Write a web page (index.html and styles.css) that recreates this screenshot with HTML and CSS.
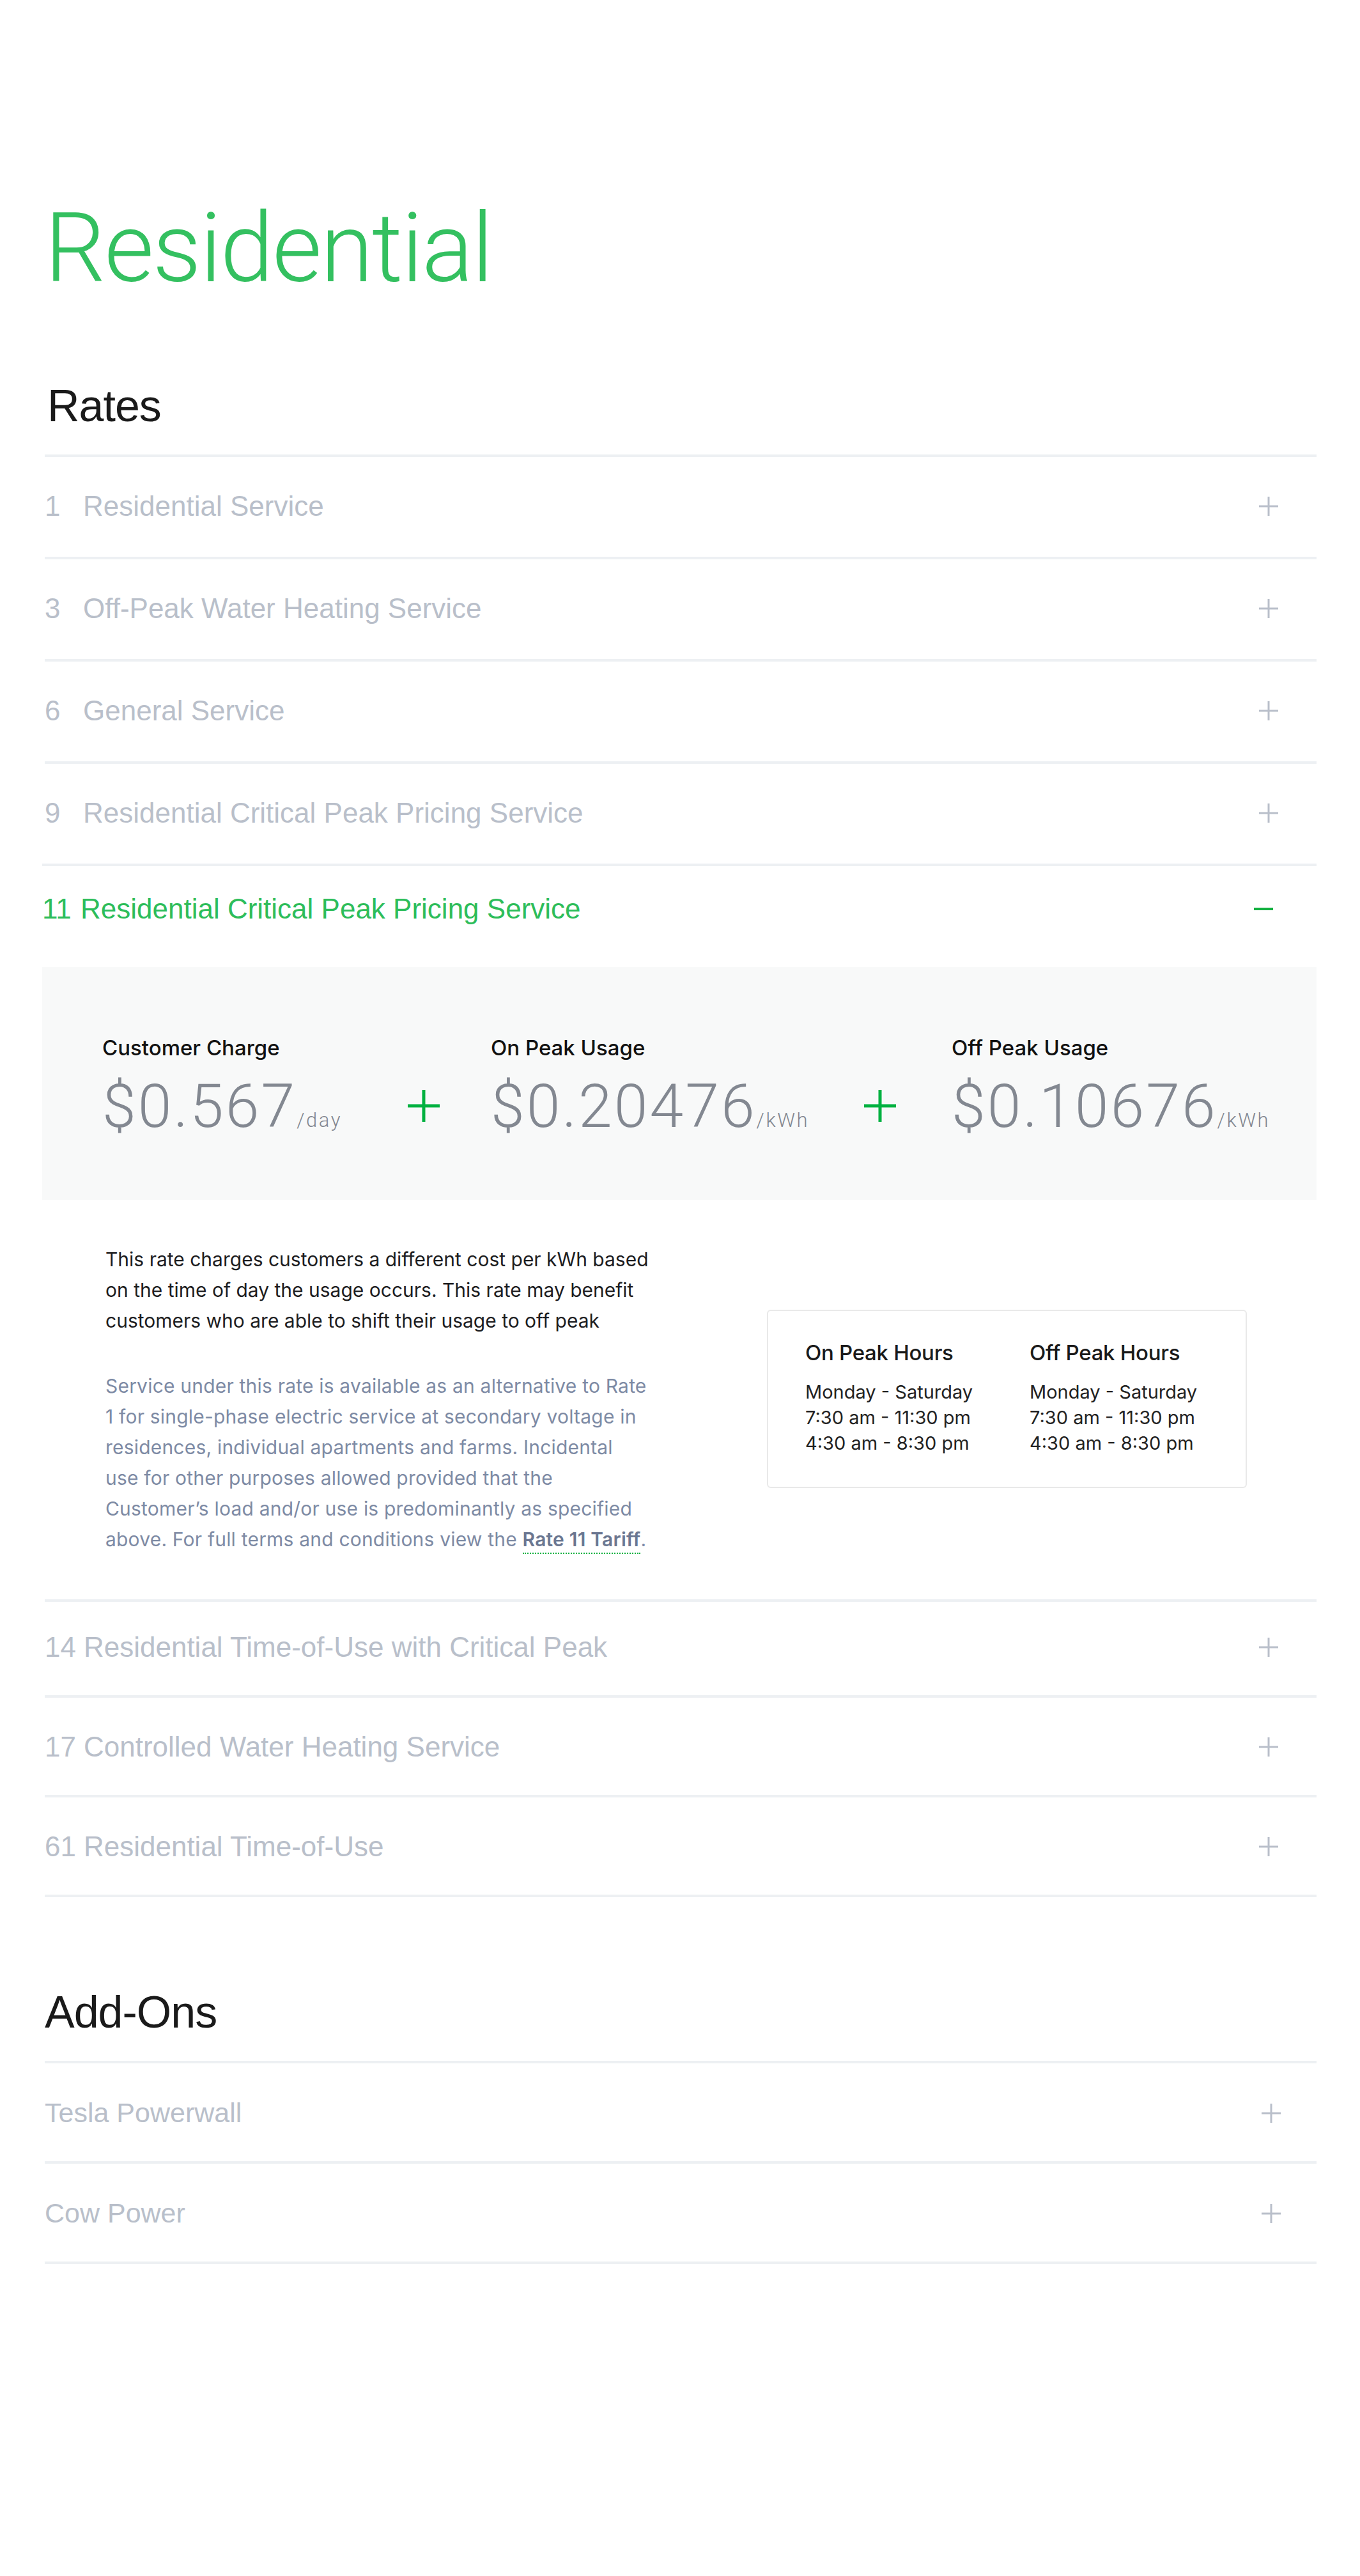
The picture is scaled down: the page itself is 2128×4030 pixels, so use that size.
FILE: index.html
```html
<!DOCTYPE html>
<html lang="en">
<head>
<meta charset="utf-8">
<title>Residential Rates</title>
<link rel="stylesheet" href="styles.css">
</head>
<body>
<main class="page">
  <h1 class="page-title">Residential</h1>

  <section class="group">
    <h2 class="group-title">Rates</h2>
    <ul class="acc">
      <li class="acc-item acc-item--top">
        <div class="acc-head"><span class="acc-num">1</span><span class="acc-name">Residential Service</span>
          <svg class="icon-plus" viewBox="0 0 30 30"><path d="M15 0v30M0 15h30"/></svg></div>
      </li>
      <li class="acc-item acc-item--top">
        <div class="acc-head"><span class="acc-num">3</span><span class="acc-name">Off-Peak Water Heating Service</span>
          <svg class="icon-plus" viewBox="0 0 30 30"><path d="M15 0v30M0 15h30"/></svg></div>
      </li>
      <li class="acc-item acc-item--top">
        <div class="acc-head"><span class="acc-num">6</span><span class="acc-name">General Service</span>
          <svg class="icon-plus" viewBox="0 0 30 30"><path d="M15 0v30M0 15h30"/></svg></div>
      </li>
      <li class="acc-item acc-item--top">
        <div class="acc-head"><span class="acc-num">9</span><span class="acc-name">Residential Critical Peak Pricing Service</span>
          <svg class="icon-plus" viewBox="0 0 30 30"><path d="M15 0v30M0 15h30"/></svg></div>
      </li>
      <li class="acc-item is-open">
        <div class="acc-head"><span class="acc-num">11</span><span class="acc-name">Residential Critical Peak Pricing Service</span>
          <svg class="icon-minus" viewBox="0 0 30 4"><path d="M0 2h30"/></svg></div>

        <div class="charges">
          <div class="charge">
            <div class="charge-label">Customer Charge</div>
            <div class="charge-price">$0.567<span class="charge-unit">/day</span></div>
          </div>
          <svg class="charge-op" viewBox="0 0 50 50"><path d="M25 0v50M0 25h50"/></svg>
          <div class="charge">
            <div class="charge-label">On Peak Usage</div>
            <div class="charge-price">$0.20476<span class="charge-unit">/kWh</span></div>
          </div>
          <svg class="charge-op" viewBox="0 0 50 50"><path d="M25 0v50M0 25h50"/></svg>
          <div class="charge">
            <div class="charge-label">Off Peak Usage</div>
            <div class="charge-price">$0.10676<span class="charge-unit">/kWh</span></div>
          </div>
        </div>

        <div class="details">
          <div class="details-text">
            <p class="lead">This rate charges customers a different cost per kWh based<br>on the time of day the usage occurs. This rate may benefit<br>customers who are able to shift their usage to off peak</p>
            <p class="terms">Service under this rate is available as an alternative to Rate<br>1 for single-phase electric service at secondary voltage in<br>residences, individual apartments and farms. Incidental<br>use for other purposes allowed provided that the<br>Customer’s load and/or use is predominantly as specified<br>above. For full terms and conditions view the <a class="terms-link" href="#">Rate 11 Tariff</a>.</p>
          </div>
          <div class="hours">
            <div class="hours-col">
              <h3 class="hours-title">On Peak Hours</h3>
              <p class="hours-text">Monday - Saturday<br>7:30 am - 11:30 pm<br>4:30 am - 8:30 pm</p>
            </div>
            <div class="hours-col">
              <h3 class="hours-title">Off Peak Hours</h3>
              <p class="hours-text">Monday - Saturday<br>7:30 am - 11:30 pm<br>4:30 am - 8:30 pm</p>
            </div>
          </div>
        </div>
      </li>
      <li class="acc-item">
        <div class="acc-head"><span class="acc-num">14</span><span class="acc-name">Residential Time-of-Use with Critical Peak</span>
          <svg class="icon-plus" viewBox="0 0 30 30"><path d="M15 0v30M0 15h30"/></svg></div>
      </li>
      <li class="acc-item">
        <div class="acc-head"><span class="acc-num">17</span><span class="acc-name">Controlled Water Heating Service</span>
          <svg class="icon-plus" viewBox="0 0 30 30"><path d="M15 0v30M0 15h30"/></svg></div>
      </li>
      <li class="acc-item">
        <div class="acc-head"><span class="acc-num">61</span><span class="acc-name">Residential Time-of-Use</span>
          <svg class="icon-plus" viewBox="0 0 30 30"><path d="M15 0v30M0 15h30"/></svg></div>
      </li>
    </ul>
  </section>

  <section class="group group--addons">
    <h2 class="group-title">Add-Ons</h2>
    <ul class="acc">
      <li class="acc-item acc-item--addon">
        <div class="acc-head"><span class="acc-name">Tesla Powerwall</span>
          <svg class="icon-plus" viewBox="0 0 30 30"><path d="M15 0v30M0 15h30"/></svg></div>
      </li>
      <li class="acc-item acc-item--addon">
        <div class="acc-head"><span class="acc-name">Cow Power</span>
          <svg class="icon-plus" viewBox="0 0 30 30"><path d="M15 0v30M0 15h30"/></svg></div>
      </li>
    </ul>
  </section>
</main>
</body>
</html>
```

FILE: styles.css
```css
* { box-sizing: border-box; }

html, body {
  margin: 0;
  padding: 0;
  background: #ffffff;
}

body {
  font-family: "Liberation Sans", Arial, sans-serif;
  color: #1c1c1e;
}

.page {
  width: 1990px;
  margin-left: 70px;
  padding-bottom: 400px;
}

.page-title {
  margin: 314px 0 0;
  font-family: Roboto, "Liberation Sans", sans-serif;
  font-weight: 300;
  font-size: 150px;
  line-height: 150px;
  letter-spacing: -2px;
  color: #34c060;
}

.group-title {
  margin: 136px 0 41px 4px;
  font-weight: 400;
  font-size: 70px;
  line-height: 70px;
  letter-spacing: -1px;
  color: #1a1a1a;
}

.group--addons .group-title {
  margin: 145px 0 41px 0;
}

.acc {
  list-style: none;
  margin: 0;
  padding: 0;
  border-bottom: 4px solid #edf0f3;
}

.acc-item {
  border-top: 4px solid #edf0f3;
  padding: 55px 0 53px;
}

.acc-item--top {
  padding-bottom: 57px;
}

.is-open + .acc-item {
  padding-top: 49px;
}

.acc-item--addon {
  padding: 56px 0 54px;
}

.acc-head {
  display: flex;
  align-items: center;
  font-size: 44px;
  line-height: 44px;
  color: #b9bfca;
}

.acc-item--addon .acc-head {
  font-size: 43px;
  line-height: 43px;
}

.acc-num {
  min-width: 48px;
  margin-right: 12px;
}

.acc-name {
  flex: 1;
}

.icon-plus {
  width: 30px;
  height: 30px;
  margin-right: 60px;
  fill: none;
  stroke: #b9bfca;
  stroke-width: 3;
}

.acc-item--addon .icon-plus {
  margin-right: 56px;
}

/* open item */
.acc-item.is-open {
  padding: 45px 0 70px;
  margin-left: -4px;
}

.is-open .acc-head {
  color: #2dbd5a;
}

.icon-minus {
  width: 30px;
  height: 4px;
  margin-right: 68px;
  fill: none;
  stroke: #13b040;
  stroke-width: 4;
}

.charges {
  margin-top: 69px;
  background: #f8f9f9;
  padding: 110px 0 99px 94px;
  display: grid;
  grid-template-columns: 478px 130px 584px 137px 1fr;
  align-items: end;
}

.charge-label {
  font-family: Inter, Roboto, "Liberation Sans", sans-serif;
  font-weight: 500;
  font-size: 33px;
  line-height: 33px;
  letter-spacing: 0;
  color: #111111;
}

.charge-price {
  margin-top: 27px;
  font-family: Roboto, "Liberation Sans", sans-serif;
  font-weight: 300;
  font-size: 95px;
  line-height: 95px;
  letter-spacing: 3px;
  color: #838891;
  white-space: nowrap;
}

.charge-unit {
  margin-left: 0;
  font-size: 31px;
  line-height: 1;
  letter-spacing: 2.5px;
}

.charge-op {
  width: 50px;
  height: 50px;
  margin-bottom: 23px;
  fill: none;
  stroke: #00b140;
  stroke-width: 5;
}

.details {
  margin-top: 69px;
  padding-left: 99px;
  display: grid;
  grid-template-columns: 1035px 751px;
  align-items: start;
}

.details-text p {
  margin: 0;
  font-family: Inter, "Liberation Sans", sans-serif;
  font-size: 30px;
  line-height: 48px;
  letter-spacing: 0;
}

.lead {
  color: #1d1d1f;
}

.details-text .terms {
  margin-top: 54px;
  color: #7d8aa4;
  letter-spacing: 0.2px;
}

.terms-link {
  color: #6b7791;
  font-weight: 600;
  text-decoration: none;
  border-bottom: 2px dotted #00b140;
  padding-bottom: 3px;
}

.hours {
  margin-top: 103px;
  border: 2px solid #e9e9e9;
  border-radius: 6px;
  padding: 49px 0 48px 58px;
  display: grid;
  grid-template-columns: 351px 351px;
}

.hours-title {
  margin: 0;
  font-family: Inter, Roboto, "Liberation Sans", sans-serif;
  font-weight: 500;
  font-size: 33px;
  line-height: 33px;
  letter-spacing: -0.3px;
  color: #1a1a1a;
}

.hours-text {
  margin: 25px 0 0;
  font-family: Inter, "Liberation Sans", sans-serif;
  font-size: 29px;
  line-height: 40px;
  letter-spacing: 0;
  color: #222222;
}
```
